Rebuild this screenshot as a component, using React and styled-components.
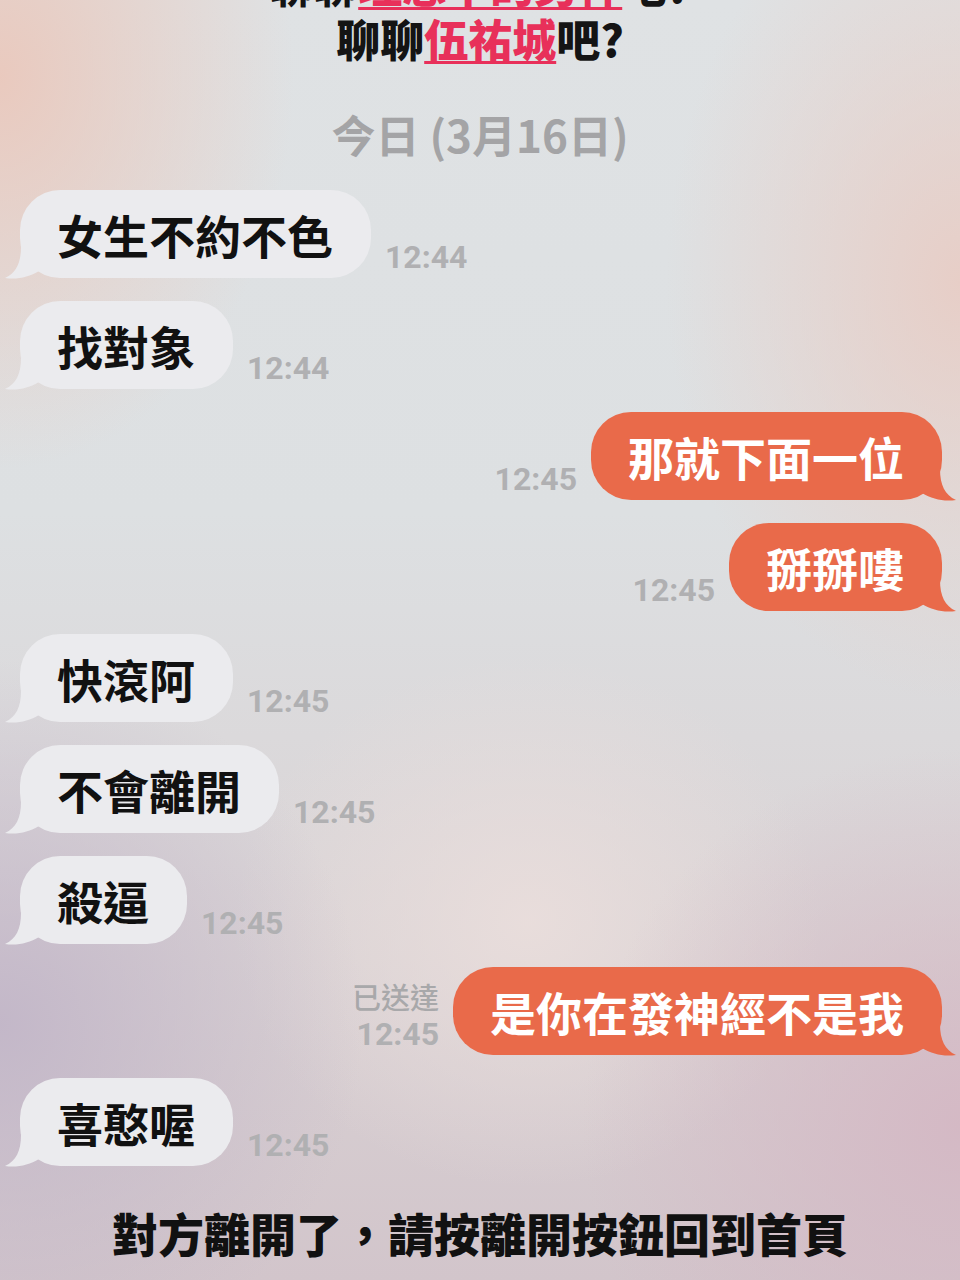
import styled, { createGlobalStyle } from "styled-components";

const GlobalStyle = createGlobalStyle`
  html, body {
    margin: 0;
    padding: 0;
  }
  body {
    font-family: "Noto Sans CJK TC", "Noto Sans", sans-serif;
  }
`;

const messages = [
  { side: "in", text: "女生不約不色", time: "12:44" },
  { side: "in", text: "找對象", time: "12:44" },
  { side: "out", text: "那就下面一位", time: "12:45" },
  { side: "out", text: "掰掰嘍", time: "12:45" },
  { side: "in", text: "快滾阿", time: "12:45" },
  { side: "in", text: "不會離開", time: "12:45" },
  { side: "in", text: "殺逼", time: "12:45" },
  { side: "out", text: "是你在發神經不是我", time: "12:45", read: "已送達" },
  { side: "in", text: "喜憨喔", time: "12:45" },
];

const Tail = ({ side }) =>
  side === "in" ? (
    <TailSvg side={side} width="34" height="34" viewBox="0 0 34 34">
      <path d="M16 0 C16 16 11 26 0 31 C12 33 24 30 34 24 L34 0 Z" />
    </TailSvg>
  ) : (
    <TailSvg side={side} width="34" height="34" viewBox="0 0 34 34">
      <path d="M18 0 C18 16 23 26 34 31 C22 33 10 30 0 24 L0 0 Z" />
    </TailSvg>
  );

const App = () => {
  return (
    <Page>
      <GlobalStyle />
      <Header>
        <TopLine>
          聊聊<Pink>理想中的男神</Pink>吧?
        </TopLine>
        <div>
          聊聊<Pink>伍祐城</Pink>吧?
        </div>
      </Header>
      <DateLabel>今日 (3月16日)</DateLabel>
      <Chat>
        {messages.map((m, i) => (
          <Row key={i} side={m.side}>
            <Bubble side={m.side}>
              {m.text}
              <Tail side={m.side} />
            </Bubble>
            <Meta side={m.side}>
              {m.read && <Read>{m.read}</Read>}
              <Time>{m.time}</Time>
            </Meta>
          </Row>
        ))}
      </Chat>
      <Notice>對方離開了，請按離開按鈕回到首頁</Notice>
    </Page>
  );
};

export default App;

const Page = styled.div`
  width: 960px;
  height: 1280px;
  overflow: hidden;
  display: flex;
  flex-direction: column;
  align-items: center;
  background:
    radial-gradient(ellipse 420px 560px at 0% 6%, rgba(234, 200, 188, 0.95), transparent 70%),
    radial-gradient(ellipse 420px 600px at 100% 22%, rgba(232, 204, 196, 0.9), transparent 70%),
    radial-gradient(ellipse 520px 520px at 0% 80%, rgba(194, 182, 200, 0.95), transparent 70%),
    radial-gradient(ellipse 540px 540px at 100% 88%, rgba(212, 184, 196, 0.95), transparent 70%),
    radial-gradient(ellipse 420px 380px at 55% 72%, rgba(234, 222, 220, 0.9), transparent 70%),
    linear-gradient(180deg, #dfe2e4 0%, #dde0e2 40%, #d9d2d4 75%, #d2c5cb 100%);
`;

const Header = styled.div`
  margin-top: -41px;
  font-size: 44px;
  line-height: 50px;
  font-weight: 900;
  color: #141414;
  text-align: center;
`;

const TopLine = styled.div`
  margin-bottom: 4px;
`;

const Pink = styled.span`
  color: #e8305a;
  text-decoration: underline;
  text-decoration-thickness: 3px;
  text-underline-offset: 4px;
`;

const DateLabel = styled.div`
  margin-top: 41px;
  font-size: 44px;
  line-height: 60px;
  font-weight: 700;
  color: #a4a4a6;
`;

const Chat = styled.div`
  align-self: stretch;
  margin-top: 26px;
  display: flex;
  flex-direction: column;
  gap: 23px;
`;

const Row = styled.div`
  display: flex;
  flex-direction: ${(p) => (p.side === "out" ? "row-reverse" : "row")};
  align-items: flex-end;
  gap: 14px;
  padding: ${(p) => (p.side === "out" ? "0 18px 0 0" : "0 0 0 20px")};
`;

const Bubble = styled.div`
  position: relative;
  height: 88px;
  display: flex;
  align-items: center;
  padding: 0 38px 0 37px;
  border-radius: 40px;
  font-size: 46px;
  font-weight: 700;
  background: ${(p) => (p.side === "out" ? "#e96a4a" : "#ebebee")};
  color: ${(p) => (p.side === "out" ? "#ffffff" : "#111111")};
  fill: ${(p) => (p.side === "out" ? "#e96a4a" : "#ebebee")};
`;

const TailSvg = styled.svg`
  position: absolute;
  bottom: -3px;
  ${(p) => (p.side === "out" ? "right: -14px;" : "left: -15px;")}
`;

const Meta = styled.div`
  display: flex;
  flex-direction: column;
  align-items: ${(p) => (p.side === "out" ? "flex-end" : "flex-start")};
  margin-bottom: 2px;
`;

const Read = styled.div`
  font-size: 29px;
  line-height: 38px;
  font-weight: 500;
  color: #a8a8aa;
`;

const Time = styled.div`
  font-family: Roboto, "Liberation Sans", sans-serif;
  font-size: 32px;
  line-height: 38px;
  font-weight: 700;
  color: #b0b0b2;
`;

const Notice = styled.div`
  margin-top: 36px;
  font-size: 46px;
  line-height: 60px;
  font-weight: 900;
  color: #111111;
`;
